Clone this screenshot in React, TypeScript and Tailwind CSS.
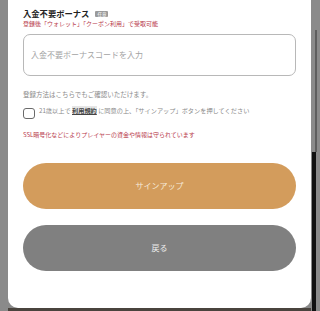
import React from 'react'

const jp = { fontFamily: '"Noto Sans CJK JP", "Noto Sans", sans-serif' }

export default function App() {
  return (
    <div className="relative flex h-[311px] w-[320px] overflow-hidden bg-[#8a8a8a]" style={jp}>
      <div className="w-2 shrink-0" />
      <div className="flex w-[303px] shrink-0 flex-col">
        <div className="flex h-[308px] flex-col rounded-b-[10px] bg-white pl-[15px] pr-[15px]">
          <div className="mt-[8px] flex h-[11px] items-center gap-[6px]">
            <span className="text-[8.3px] font-bold leading-[11px] text-[#222]">入金不要ボーナス</span>
            <span className="rounded-[1px] bg-[#9a9a9a] px-[2px] text-[4.5px] leading-[6px] text-white">任意</span>
          </div>
          <div className="mt-[1px] h-[7px] text-[6px] leading-[7px] text-[#b8394a]">
            登録後「ウォレット」「クーポン利用」で受取可能
          </div>
          <div className="mt-[7px] flex h-[42px] items-center rounded-[7px] border border-[#b8b8b8] px-[7px]">
            <span className="text-[8px] text-[#a3a3a3]">入金不要ボーナスコードを入力</span>
          </div>
          <div className="mt-[13px] h-[10px] text-[6.5px] leading-[10px] text-[#8a8a8a]">
            登録方法はこちらでもご確認いただけます。
          </div>
          <div className="mt-[8px] flex items-start gap-[4px]">
            <div className="mt-[1px] h-[11px] w-[12px] shrink-0 rounded-[3px] border-[1.5px] border-[#6a6a6a]" />
            <div className="text-[6.2px] leading-[8px] text-[#8a8a8a]">
              21歳以上で <span className="bg-[#e6e6e6] font-bold text-[#444] underline">利用規約</span>{' '}
              に同意の上、「サインアップ」ボタンを押してください
            </div>
          </div>
          <div className="mt-[12px] h-[8px] text-[6px] leading-[8px] text-[#b8394a]">
            SSL暗号化などによりプレイヤーの資金や情報は守られています
          </div>
          <button className="mt-[24px] flex h-[46px] items-center justify-center rounded-full bg-[#d39c5c] text-[8px] text-[#f6ead9]">
            サインアップ
          </button>
          <button className="mt-[16px] flex h-[46px] items-center justify-center rounded-full bg-[#808080] text-[8px] text-[#eeeeee]">
            戻る
          </button>
        </div>
        <div className="flex-1 bg-[#4a443e]" />
      </div>
      <div className="relative flex-1">
        <div className="absolute left-[4px] top-[30px] h-[122px] w-[2px] bg-[#5e5e5e]" />
        <div className="absolute left-[1px] top-[152px] h-[159px] w-[4px] bg-[#111]" />
      </div>
    </div>
  )
}
